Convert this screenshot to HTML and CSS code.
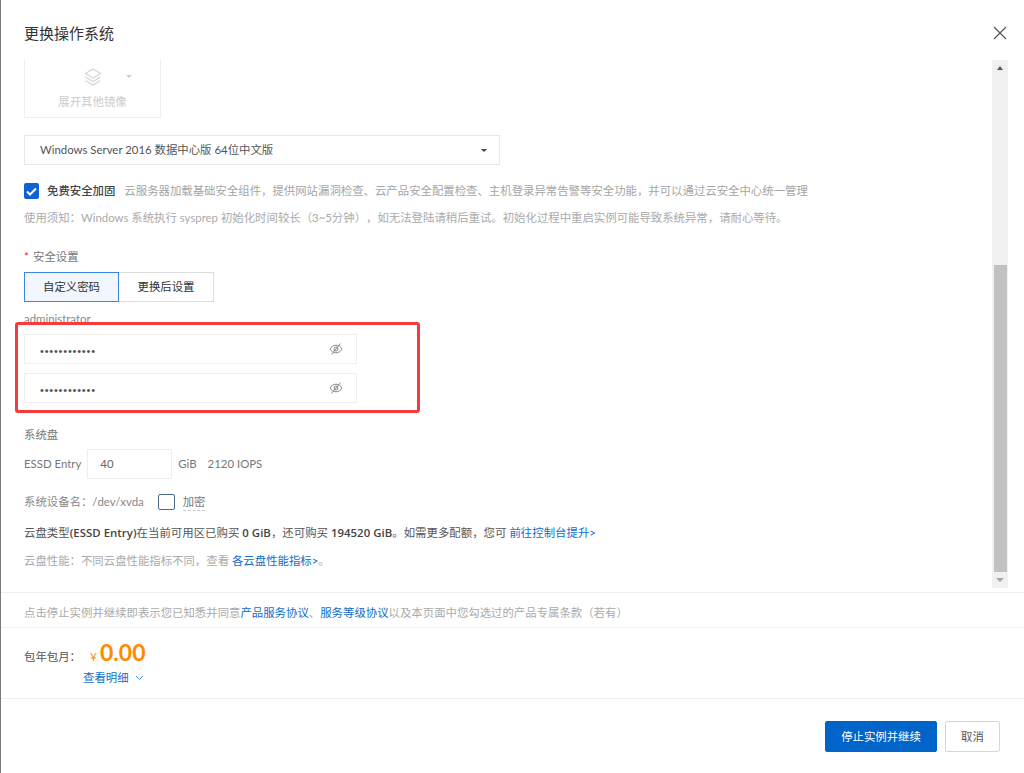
FILE: index.html
```html
<!DOCTYPE html>
<html lang="zh-CN">
<head>
<meta charset="utf-8">
<title>更换操作系统</title>
<link rel="stylesheet" href="styles.css">
</head>
<body>
<div class="dialog">
  <header class="head">
    <h1 class="title">更换操作系统</h1>
    <svg class="close" width="14" height="14" viewBox="0 0 14 14"><path d="M1 1l12 12M13 1L1 13" stroke="#555" stroke-width="1.2" fill="none"/></svg>
  </header>
  <div class="body">
    <div class="content">
      <div class="image-card">
        <div class="image-top">
          <svg class="layers" width="20" height="20" viewBox="0 0 20 20" fill="none" stroke="#d4d4d4" stroke-width="1.1"><path d="M10 2l7.500 4.500L10 11 2.500 6.500z"/><path d="M2.500 10L10 14.500 17.500 10"/><path d="M2.500 13.500L10 18l7.500-4.500"/></svg>
          <span class="caret caret-light"></span>
        </div>
        <div class="image-label">展开其他镜像</div>
      </div>
      <div class="select">
        <span>Windows Server 2016 数据中心版 64位中文版</span>
        <span class="caret caret-dark"></span>
      </div>
      <div class="harden">
        <span class="check-on"><svg width="11" height="9" viewBox="0 0 11 9"><path d="M1 4.500l3 3 6-6" stroke="#fff" stroke-width="2" fill="none"/></svg></span>
        <strong class="harden-name">免费安全加固</strong>
        <span class="muted">云服务器加载基础安全组件，提供网站漏洞检查、云产品安全配置检查、主机登录异常告警等安全功能，并可以通过云安全中心统一管理</span>
      </div>
      <p class="notice muted">使用须知：Windows 系统执行 sysprep 初始化时间较长（3~5分钟），如无法登陆请稍后重试。初始化过程中重启实例可能导致系统异常，请耐心等待。</p>
      <div class="sec-label"><span class="star">*</span>安全设置</div>
      <div class="tabs">
        <div class="tab tab-on">自定义密码</div>
        <div class="tab tab-off">更换后设置</div>
      </div>
      <div class="user">administrator</div>
      <div class="pw-group">
        <div class="pw"><span class="dots">••••••••••••</span><svg width="14" height="14" viewBox="0 0 14 14" fill="none" stroke="#888" stroke-width="1"><path d="M1 7c1.500-2.500 3.500-3.800 6-3.800S11.500 4.500 13 7c-1.500 2.500-3.500 3.800-6 3.800S2.500 9.500 1 7z"/><circle cx="7" cy="7" r="2"/><path d="M2.500 12.500l9-11"/></svg></div>
        <div class="pw"><span class="dots">••••••••••••</span><svg width="14" height="14" viewBox="0 0 14 14" fill="none" stroke="#888" stroke-width="1"><path d="M1 7c1.500-2.500 3.500-3.800 6-3.800S11.500 4.500 13 7c-1.500 2.500-3.500 3.800-6 3.800S2.500 9.500 1 7z"/><circle cx="7" cy="7" r="2"/><path d="M2.500 12.500l9-11"/></svg></div>
        <div class="redbox"></div>
      </div>
      <div class="disk-title">系统盘</div>
      <div class="disk-row">
        <span>ESSD Entry</span>
        <span class="size-input">40</span>
        <span class="gib">GiB</span>
        <span class="iops">2120 IOPS</span>
      </div>
      <div class="device-row">
        <span>系统设备名：/dev/xvda</span>
        <span class="check-off"></span>
        <span class="encrypt">加密</span>
      </div>
      <p class="quota">云盘类型<b>(ESSD Entry)</b>在当前可用区已购买 <b>0 GiB</b>，还可购买 <b>194520 GiB</b>。如需更多配额，您可 <a class="link">前往控制台提升&gt;</a></p>
      <p class="perf muted">云盘性能：不同云盘性能指标不同，查看 <a class="link">各云盘性能指标&gt;</a>。</p>
    </div>
    <div class="scrollbar">
      <span class="arrow-up"></span>
      <div class="thumb"></div>
      <span class="arrow-down"></span>
    </div>
  </div>
  <div class="agree muted">点击停止实例并继续即表示您已知悉并同意<a class="link">产品服务协议</a>、<a class="link">服务等级协议</a>以及本页面中您勾选过的产品专属条款（若有）</div>
  <div class="price">
    <div class="price-row">
      <span class="price-label">包年包月：</span>
      <span class="yen">¥</span><span class="amount">0.00</span>
    </div>
    <div class="detail"><a class="link">查看明细</a><svg width="9" height="6" viewBox="0 0 9 6"><path d="M1 1l3.500 3.500L8 1" stroke="#4a8fd8" fill="none"/></svg></div>
  </div>
  <footer class="foot">
    <button class="btn btn-primary">停止实例并继续</button>
    <button class="btn btn-cancel">取消</button>
  </footer>
</div>
</body>
</html>
```
FILE: styles.css
```css
* { box-sizing: border-box; }
html, body { margin: 0; height: 100%; }
body {
  background: #7a7a7a;
  padding-left: 1px;
  font-family: "Lato", "Noto Sans CJK SC", sans-serif;
  font-size: 11.4px;
  line-height: 18px;
  color: #666;
  text-spacing-trim: space-all;
}
.dialog { height: 773px; background: #fff; display: flex; flex-direction: column; overflow: hidden; }
.head { height: 60px; flex: none; display: flex; align-items: center; justify-content: space-between; padding: 6px 17px 0 23px; }
.title { margin: 0; font-size: 15px; font-weight: 400; color: #333; line-height: 20px; }
.body { height: 533px; flex: none; display: flex; border-bottom: 1px solid #eee; padding-right: 15px; }
.content { flex: 1; padding: 0 0 0 23px; min-width: 0; }
.image-card { width: 137px; height: 58px; border: 1px solid #eee; border-top: 0; margin-bottom: 17px; text-align: center; color: #ccc; }
.image-top { height: 33px; display: flex; align-items: center; padding: 0 0 0 58px; }
.layers { flex: none; }
.caret { display: block; width: 0; height: 0; border-left: 3px solid transparent; border-right: 3px solid transparent; }
.caret-light { border-top: 3px solid #ccc; margin-left: 23px; }
.caret-dark { border-top: 3px solid #444; }
.image-label { line-height: 18px; margin-top: 0; }
.select { width: 476px; height: 30px; border: 1px solid #e8e8e8; display: flex; align-items: center; justify-content: space-between; padding: 0 12px 0 15px; color: #555; margin-bottom: 17px; }
.harden { display: flex; align-items: center; height: 18px; white-space: nowrap; }
.check-on { width: 15px; height: 16px; background: #0f62d6; border-radius: 2px; display: flex; align-items: center; justify-content: center; flex: none; }
.harden-name { font-weight: 500; color: #444; margin: 0 9px 0 8px; }
.muted { color: #aaa; }
.harden .muted { color: #a5a5a5; }
.notice { margin: 9px 0 0; white-space: nowrap; }
.sec-label { margin-top: 21px; color: #777; display: flex; }
.star { color: #e22; width: 9px; }
.tabs { display: flex; margin-top: 6px; }
.tab { width: 95px; height: 30px; display: flex; align-items: center; justify-content: center; color: #333; }
.tab-on { background: #f2f7ff; border: 1px solid #3a86e8; }
.tab-off { border: 1px solid #ddd; border-left: 0; }
.user { margin-top: 8px; color: #888; line-height: 18px; }
.pw-group { position: relative; margin-top: 6px; width: 333px; display: flex; flex-direction: column; gap: 9px; }
.pw { height: 30px; border: 1px solid #eee; display: flex; align-items: center; justify-content: space-between; padding: 0 13px 0 15px; }
.dots { font-family: "Liberation Sans", sans-serif; font-size: 11px; letter-spacing: 0.8px; color: #555; padding-top: 3px; }
.redbox { position: absolute; left: -9px; top: -12px; width: 405px; height: 91px; border: 3px solid #f53c3c; border-radius: 3px; }
.disk-title { margin-top: 23px; color: #777; }
.disk-row { display: flex; align-items: center; height: 30px; margin-top: 5px; color: #777; }
.size-input { width: 85px; height: 30px; border: 1px solid #eee; border-radius: 1px; margin-left: 6px; padding: 5px 12px; line-height: 18px; color: #666; }
.gib { margin-left: 6px; }
.iops { margin-left: 11px; }
.device-row { display: flex; align-items: center; height: 18px; margin-top: 14px; color: #888; }
.check-off { width: 17px; height: 16px; border: 1px solid #4a6a90; border-radius: 2px; margin-left: 14px; }
.encrypt { margin-left: 8px; border-bottom: 1px dashed #ccc; line-height: 16px; color: #777; }
.quota { margin: 13px 0 0; color: #555; white-space: nowrap; letter-spacing: 0.03px; }
.quota b { font-family: "Open Sans", "Noto Sans CJK SC", sans-serif; font-weight: 600; color: #444; }
.link { color: #0f6dcc; }
.perf { margin: 10px 0 0; }
.scrollbar { width: 16px; height: 528px; flex: none; background: #f1f1f1; display: flex; flex-direction: column; align-items: center; margin-left: -1px; margin-right: 1px; }
.thumb { width: 13px; height: 307px; margin-top: 195px; background: #c1c1c1; margin-bottom: auto; }
.arrow-up { margin-top: 6px; width: 0; height: 0; border-left: 3px solid transparent; border-right: 3px solid transparent; border-top: 0; border-bottom: 4px solid #555; }
.arrow-down { margin-bottom: 6px; width: 0; height: 0; border-left: 4px solid transparent; border-right: 4px solid transparent; border-top: 4px solid #a8a8a8; }
.agree { height: 35px; flex: none; padding: 6px 0 0 23px; display: flex; align-items: center; border-bottom: 1px solid #eee; white-space: pre; }
.price { height: 71px; flex: none; border-bottom: 1px solid #eee; padding: 8px 0 0 23px; }
.price-row { display: flex; align-items: baseline; height: 32px; }
.price-label { width: 66px; color: #555; }
.yen { color: #f98e1c; font-size: 12px; width: 10px; }
.amount { color: #ff8a00; font-size: 23px; font-weight: 700; line-height: 32px; }
.detail { display: flex; align-items: center; margin: 1px 0 0 59px; gap: 6px; height: 18px; }
.foot { flex: 1; display: flex; justify-content: flex-end; align-items: flex-start; gap: 8px; padding: 22px 24px 0 0; }
.btn { height: 31px; font: inherit; border-radius: 2px; cursor: pointer; }
.btn-primary { width: 112px; background: #0064c8; border: 1px solid #0064c8; color: #fff; }
.btn-cancel { width: 55px; background: #fff; border: 1px solid #d6d6d6; color: #555; }
```
